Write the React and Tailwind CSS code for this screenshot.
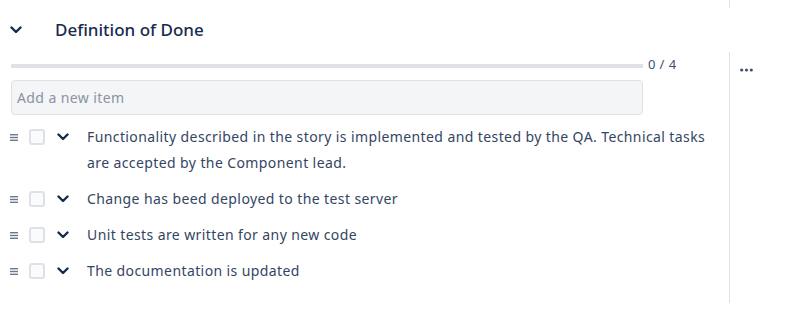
import React from "react";

const items = [
  "Functionality described in the story is implemented and tested by the QA. Technical tasks are accepted by the Component lead.",
  "Change has beed deployed to the test server",
  "Unit tests are written for any new code",
  "The documentation is updated",
];

function Chevron({ className }) {
  return (
    <svg viewBox="0 0 12 8" className={className} fill="none">
      <path d="M1.5 1.5 L6 6 L10.5 1.5" stroke="currentColor" strokeWidth="2.4" strokeLinecap="round" strokeLinejoin="round" />
    </svg>
  );
}

function Handle() {
  return (
    <svg viewBox="0 0 8 7" className="w-[8px] h-[7px] text-[#6b778c]">
      <rect x="0" y="0" width="8" height="1.4" fill="currentColor" />
      <rect x="0" y="2.8" width="8" height="1.4" fill="currentColor" />
      <rect x="0" y="5.6" width="8" height="1.4" fill="currentColor" />
    </svg>
  );
}

function Dots() {
  return (
    <svg viewBox="0 0 13 4" className="w-[13px] h-[4px] text-[#42526e]">
      <circle cx="1.7" cy="2" r="1.6" fill="currentColor" />
      <circle cx="6.5" cy="2" r="1.6" fill="currentColor" />
      <circle cx="11.3" cy="2" r="1.6" fill="currentColor" />
    </svg>
  );
}

export default function App() {
  return (
    <div className="w-[799px] h-[324px] bg-white overflow-hidden" style={{ fontFamily: '"Noto Sans", "Open Sans", sans-serif' }}>
      <div className="flex h-[52px]">
        <div className="w-[729px] flex items-center pt-[8px]">
          <Chevron className="ml-[10px] w-[12px] h-[8px] text-[#172b4d]" />
          <span className="ml-[33px] text-[17px] text-[#172b4d] font-medium">Definition of Done</span>
        </div>
        <div className="w-px h-[8px] bg-[#dfe1e6]" />
      </div>
      <div className="flex">
        <div className="w-[729px]">
          <div className="flex items-center pl-[11px] h-[26px]">
            <div className="w-[632px] h-[4px] bg-[#dfe1e6] mt-[2px]" />
            <span className="ml-[5px] text-[13px] tracking-[0.4px] text-[#42526e] leading-none -mt-[1px]">0 / 4</span>
          </div>
          <div className="pl-[11px] mt-[2px]">
            <div className="w-[632px] h-[35px] rounded-[4px] border border-[#dfe1e6] bg-[#f4f5f7] flex items-center pl-[5px]">
              <span className="text-[14px] tracking-[0.4px] text-[#8993a4]">Add a new item</span>
            </div>
          </div>
          <div className="mt-[4px]">
            {items.map((t, i) => (
              <div key={i} className="flex items-start py-[5px]">
                <div className="flex items-center h-[26px] shrink-0">
                  <div className="ml-[10px]"><Handle /></div>
                  <div className="ml-[11px] w-[16px] h-[16px] rounded-[3px] border-2 border-[#dfe1e6] bg-[#fafbfc]" />
                  <Chevron className="ml-[12px] w-[12px] h-[8px] text-[#172b4d]" />
                </div>
                <div className="ml-[18px] w-[630px] text-[14px] tracking-[0.4px] leading-[26px] text-[#344563]">{t}</div>
              </div>
            ))}
          </div>
        </div>
        <div className="flex-1 h-[251px] border-l border-[#dfe1e6] pl-[10px] pt-[16px]">
          <Dots />
        </div>
      </div>
    </div>
  );
}
